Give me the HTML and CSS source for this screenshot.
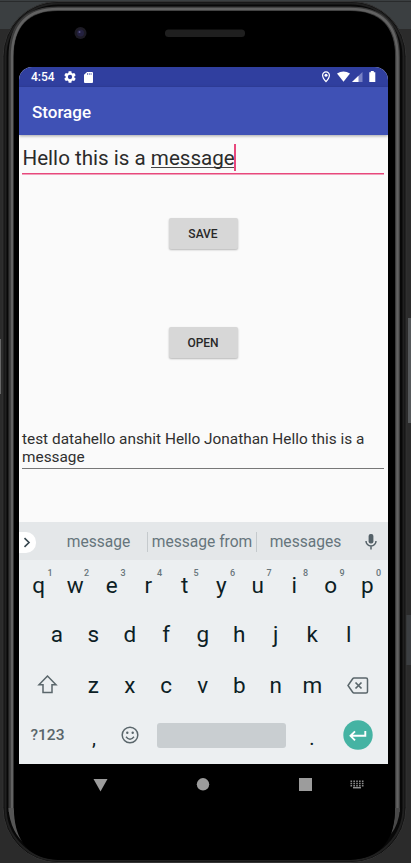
FILE: index.html
```html
<!DOCTYPE html>
<html lang="en">
<head>
<meta charset="utf-8">
<title>Storage</title>
<link rel="stylesheet" href="styles.css">
</head>
<body>
<div class="desk">
  <svg class="shell" width="411" height="863" viewBox="0 0 411 863">
    <rect width="411" height="863" fill="#2b2b2b"/>
    <rect width="411" height="29" fill="#3b3f41"/>
    <rect y="1" width="411" height="1" fill="#292b2c"/>
    <rect x="405" y="615" width="6" height="50" fill="#3b3e41"/>
    <rect x="-2" y="339" width="3" height="55" fill="#666"/>
    <rect x="408" y="318" width="3" height="105" fill="#55585a"/>
    <rect x="3" y="1.500" width="403" height="861" rx="55" fill="#101010" stroke="#333"/>
    <rect x="5.500" y="3.500" width="398" height="857" rx="53" fill="#080808" stroke="#202020" stroke-width="2"/>
    <path d="M11 812V57Q11 9 58 9H350Q397.500 9 397.500 57V812" fill="none" stroke="#3a3a3a" stroke-width="5"/>
    <path d="M12 812V57Q12 9 58 9H350Q397.500 9 397.500 57V812" fill="none" stroke="#626262" stroke-width="2.500"/>
    <path d="M8.500 808Q10 832 27 846Q16 830 13.500 808Z" fill="#555"/>
    <path d="M400 808Q399 824 391 834Q395 821 395 808Z" fill="#484848"/>
    <path d="M14 57Q14 11 58 11H350Q395 11 395 57V812Q393 858 350 860H58Q16 858 14 812Z" fill="#000"/>
    <circle cx="80.500" cy="33" r="6" fill="#1d1b25"/><circle cx="80.500" cy="33" r="3.500" fill="#24213f"/><circle cx="79.500" cy="32" r="1" fill="#5a5688"/>
    <rect x="165" y="29.500" width="80" height="7.500" rx="3.500" fill="#1f1f1f"/>
  </svg>
  <main class="screen">
    <div class="status">
      <span class="time">4:54</span>
      <svg class="gear" width="12" height="12" viewBox="2 2 20 20"><path fill="#fff" d="M19.140 12.940c.04-.3.060-.61.060-.94s-.02-.64-.07-.94l2.030-1.580c.18-.14.230-.41.120-.61l-1.920-3.320c-.12-.22-.37-.29-.59-.22l-2.390.96c-.5-.38-1.030-.7-1.620-.94L14.400 2.810c-.04-.24-.24-.41-.48-.41h-3.840c-.24 0-.43.170-.47.410l-.36 2.540c-.59.240-1.130.570-1.620.94l-2.390-.96c-.22-.08-.47 0-.59.220L2.740 8.870c-.12.210-.08.470.12.610l2.030 1.580c-.05.300-.09.630-.09.940s.02.640.070.940l-2.030 1.580c-.18.140-.23.410-.12.610l1.920 3.320c.12.220.37.290.59.220l2.390-.96c.5.380 1.030.7 1.620.94l.36 2.540c.05.240.24.410.48.410h3.840c.24 0 .44-.17.470-.41l.36-2.540c.59-.24 1.130-.56 1.620-.94l2.390.96c.22.080.47 0 .59-.22l1.920-3.320c.12-.22.070-.47-.12-.61zM12 15.600a3.600 3.600 0 1 1 0-7.200 3.600 3.600 0 0 1 0 7.200z"/></svg>
      <svg class="sd" width="9" height="11" viewBox="0 0 9 12" preserveAspectRatio="none"><path fill="#fff" d="M3 0h5q1 0 1 1v10q0 1-1 1H1q-1 0-1-1V3z"/><path stroke="#303f9f" stroke-width=".7" d="M3.500 1.200v2M5.300 1.200v2M7.100 1.200v2"/></svg>
      <span class="grow"></span>
      <svg width="56" height="12" viewBox="0 0 56 12"><path d="M5 .8A3.400 3.400 0 0 0 1.600 4.300C1.600 7 5 10.700 5 10.700S8.400 7 8.400 4.300A3.400 3.400 0 0 0 5 .8Z" fill="none" stroke="#fff" stroke-width="1.200"/><circle cx="5" cy="4.300" r="1.500" fill="#fff"/><path d="M16 2.500Q22.500-1.500 29 2.500L22.500 10.800Z" fill="#fff"/><path d="M41.500 1v10H31Z" fill="#7982c5"/><path d="M37.500 4.700V11H31Z" fill="#fff"/><path d="M49.800 1.200V0h3v1.200h1.500V11h-6V1.200Z" fill="#fff"/></svg>
    </div>
    <header class="appbar">Storage</header>
    <section class="content">
      <div class="field">Hello this is a <span class="word">message</span><i class="caret"></i></div>
      <button class="btn save">SAVE</button>
      <button class="btn open">OPEN</button>
      <div class="result">test datahello anshit Hello Jonathan Hello this is a message</div>
    </section>
    <section class="keyboard">
      <div class="suggest">
        <span class="more"><svg width="8" height="11" viewBox="0 0 8 11"><path d="M1.500 1.200 6 5.500 1.500 9.800" fill="none" stroke="#37474f" stroke-width="1.600"/></svg></span>
        <span class="s1">message</span><span class="s2">message from</span><span class="s3">messages</span>
        <svg class="mic" width="12" height="16" viewBox="0 0 12 16"><rect x="3.600" y="0" width="4.800" height="9.500" rx="2" fill="#546168"/><path d="M1 7a5 5 0 0 0 10 0M6 12v3.500" fill="none" stroke="#546168" stroke-width="1.500"/></svg>
      </div>
      <div class="keys top">
        <span>q<sup>1</sup></span><span>w<sup>2</sup></span><span>e<sup>3</sup></span><span>r<sup>4</sup></span><span>t<sup>5</sup></span><span>y<sup>6</sup></span><span>u<sup>7</sup></span><span>i<sup>8</sup></span><span>o<sup>9</sup></span><span>p<sup>0</sup></span>
      </div>
      <div class="keys mid"><span>a</span><span>s</span><span>d</span><span>f</span><span>g</span><span>h</span><span>j</span><span>k</span><span>l</span></div>
      <div class="keys low">
        <svg class="wide" width="56" height="24" viewBox="0 0 56 24"><path d="M28.500 4 20 12.800h4v7.700h9v-7.700h4Z" fill="none" stroke="#5a666b" stroke-width="1.500"/></svg>
        <span>z</span><span>x</span><span>c</span><span>v</span><span>b</span><span>n</span><span>m</span>
        <svg class="wide" width="55" height="24" viewBox="0 -1 55 24"><path d="M23 5h12q1.500 0 1.500 1.500v12q0 1.500-1.500 1.500H23q-.8 0-1.300-.7L17 12.500l4.700-6.800Q22.200 5 23 5Z" fill="none" stroke="#5a666b" stroke-width="1.500"/><path d="m24.500 9.500 6 6m0-6-6 6" stroke="#5a666b" stroke-width="1.700"/></svg>
      </div>
      <div class="bottom">
        <span class="sym">?123</span><span class="punct comma">,</span>
        <svg class="smile" width="18" height="18" viewBox="0 0 18 18"><circle cx="9" cy="9" r="7.800" fill="none" stroke="#5a666b" stroke-width="1.500"/><circle cx="6.300" cy="6.800" r="1.200" fill="#5a666b"/><circle cx="11.700" cy="6.800" r="1.200" fill="#5a666b"/><path d="M5 10.800q4 5 8 0" fill="none" stroke="#5a666b" stroke-width="1.400"/></svg>
        <span class="space"></span><span class="punct dot">.</span>
        <svg class="enter" width="30" height="30" viewBox="0 0 30 30"><circle cx="15" cy="15" r="14.700" fill="#45b3a3"/><path d="M22.300 11v4.800H8M12 11.300l-4.500 4.500 4.500 4.500" fill="none" stroke="#fff" stroke-width="1.900"/></svg>
      </div>
    </section>
    <nav class="nav">
      <svg width="369" height="40" viewBox="0 0 369 40"><path d="M74.500 15h14l-7 12.500Z" fill="#9c9c9c"/><circle cx="184" cy="20.300" r="6.200" fill="#9c9c9c"/><rect x="280" y="14" width="13" height="13" fill="#9c9c9c"/><path d="M331.500 17.200h13M331.500 19.500h13M331.500 21.800h13" stroke="#8b8b8b" stroke-width="1.500" stroke-dasharray="1.600 1.250"/><path d="M334 23.700h8" stroke="#8b8b8b" stroke-width="1.500"/></svg>
    </nav>
  </main>
</div>
</body>
</html>
```
FILE: styles.css
```css
* { box-sizing: border-box; }
body { margin: 0; font-family: Roboto, sans-serif; }
.desk { position: relative; width: 411px; height: 863px; overflow: hidden; padding: 67px 23px 0 19px; background: #2b2b2b; }
.shell { position: absolute; left: 0; top: 0; }
.screen { position: relative; width: 369px; height: 748px; border-radius: 13px 13px 0 0; overflow: hidden; display: flex; flex-direction: column; background: #fafafa; }
.screen > * { flex: none; }
.status { height: 20px; background: #303f9f; display: flex; align-items: center; padding: 0 11px 0 12px; color: #fff; }
.time { font-size: 12px; font-weight: 500; width: 33px; }
.gear { margin-right: 8px; }
.grow { flex: 1; }
.appbar { height: 48px; background: #3f51b5; color: #fff; font-size: 17px; font-weight: 500; line-height: 50px; padding-left: 13px; box-shadow: 0 1px 3px rgba(0,0,0,.35); position: relative; }
.content { height: 387px; padding: 8px 4px 0 3px; display: flex; flex-direction: column; align-items: center; }
.field { align-self: stretch; height: 31px; border-bottom: 1px solid #e8487c; box-shadow: 0 1px 0 #f0a0ba; font-size: 20.600px; line-height: 31px; color: #2b2b2b; white-space: pre; display: flex; padding-left: .5px; }
.word { height: 25px; border-bottom: 1px solid #444; }
.caret { width: 2px; height: 27px; margin-left: -.5px; margin-top: 1px; background: #e8487c; }
.btn { width: 69px; height: 31px; flex: none; border: 0; border-radius: 2px; padding: 0; background: #d7d7d7; color: #282828; font: 500 12px Roboto, sans-serif; box-shadow: 0 1px 2px rgba(0,0,0,.28); }
.save { margin-top: 44px; }
.open { margin-top: 78px; }
.result { align-self: stretch; height: 39px; margin-top: 72px; border-bottom: 1px solid #777; font-size: 15.380px; line-height: 18px; color: #303030; }
.keyboard { height: 242px; background: #eceff1; color: #0d1e25; }
.suggest { height: 38px; background: #e4e7e9; display: flex; align-items: center; color: #66757c; font-size: 15.600px; padding-top: 2px; }
.more { width: 17px; height: 21px; border-radius: 0 10px 10px 0; background: #fff; display: flex; align-items: center; padding-left: 4px; }
.suggest > span:not(.more) { text-align: center; height: 20px; line-height: 20px; }
.s1 { width: 112px; padding-left: 14px; border-right: 1px solid #c5cacd; }
.s2 { width: 109px; border-right: 1px solid #c5cacd; }
.s3 { width: 97px; }
.mic { margin-left: 11px; }
.keys { display: flex; font-size: 22.500px; line-height: 26px; }
.keys span { width: 36.500px; text-align: center; position: relative; }
.top { padding: 12px 0 0 1.500px; }
.top sup { position: absolute; left: 27px; top: -5px; font-size: 9px; line-height: 12px; font-weight: 500; color: #68757b; }
.mid { padding: 23px 0 0 19.500px; }
.low { padding-top: 25px; }
.bottom { display: flex; align-items: center; height: 44px; margin-top: 15px; }
.sym { width: 57px; text-align: center; font-size: 15.500px; font-weight: 500; color: #5a666b; }
.punct { font-size: 20px; text-align: center; width: 36px; padding-top: 5px; }
.smile { margin-left: 9px; }
.space { width: 129px; height: 25px; margin-left: 18px; border-radius: 3px; background: #c9ced1; }
.dot { margin-left: 8px; }
.enter { margin-left: 13px; }
.nav { height: 51px; background: #000; }
```
